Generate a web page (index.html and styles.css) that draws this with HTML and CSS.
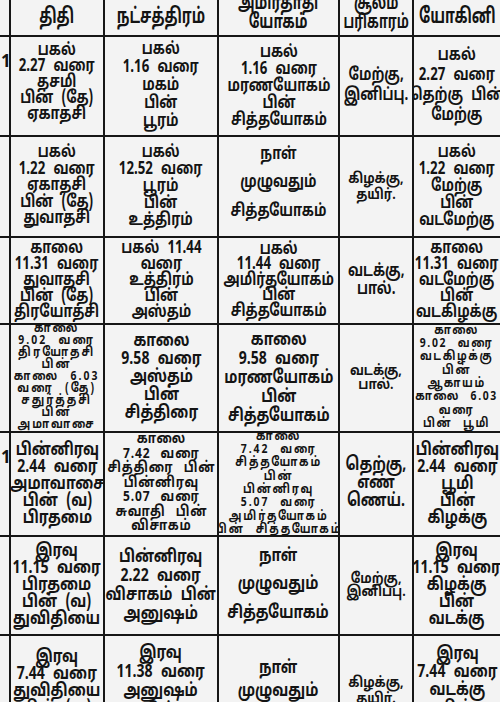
FILE: index.html
```html
<!DOCTYPE html>
<html lang="ta">
<head>
<meta charset="utf-8">
<link rel="stylesheet" href="styles.css">
</head>
<body>
<div class="sheet">
<div class="grid">
  <div class="cell stub"></div>
  <div class="cell head"><div class="t">திதி</div></div>
  <div class="cell head"><div class="t">நட்சத்திரம்</div></div>
  <div class="cell head two"><div class="t">அமிர்தாதி<br>யோகம்</div></div>
  <div class="cell head two sm"><div class="t">சூலம்<br>பரிகாரம்</div></div>
  <div class="cell head"><div class="t">யோகினி</div></div>

  <div class="cell stub"><span class="num">1</span></div>
  <div class="cell l16 up"><div class="t">பகல்<br>2.27 வரை<br>தசமி<br>பின் (தே)<br>ஏகாதசி</div></div>
  <div class="cell l18"><div class="t">பகல்<br>1.16 வரை<br>மகம்<br>பின்<br>பூரம்</div></div>
  <div class="cell l17"><div class="t">பகல்<br>1.16 வரை<br>மரணயோகம்<br>பின்<br>சித்தயோகம்</div></div>
  <div class="cell l20"><div class="t">மேற்கு,<br>இனிப்பு.</div></div>
  <div class="cell l20"><div class="t">பகல்<br>2.27 வரை<br>தெற்கு பின்<br>மேற்கு</div></div>

  <div class="cell stub"></div>
  <div class="cell l165"><div class="t">பகல்<br>1.22 வரை<br>ஏகாதசி<br>பின் (தே)<br>துவாதசி</div></div>
  <div class="cell l17"><div class="t">பகல்<br>12.52 வரை<br>பூரம்<br>பின்<br>உத்திரம்</div></div>
  <div class="cell l28 up"><div class="t">நாள்<br>முழுவதும்<br>சித்தயோகம்</div></div>
  <div class="cell l16 small"><div class="t">கிழக்கு,<br>தயிர்.</div></div>
  <div class="cell l17"><div class="t">பகல்<br>1.22 வரை<br>மேற்கு<br>பின்<br>வடமேற்கு</div></div>

  <div class="cell stub"></div>
  <div class="cell l16"><div class="t">காலை<br>11.31 வரை<br>துவாதசி<br>பின் (தே)<br>திரயோதசி</div></div>
  <div class="cell l16"><div class="t">பகல் 11.44<br>வரை<br>உத்திரம்<br>பின்<br>அஸ்தம்</div></div>
  <div class="cell l155"><div class="t">பகல்<br>11.44 வரை<br>அமிர்தயோகம்<br>பின்<br>சித்தயோகம்</div></div>
  <div class="cell l18"><div class="t">வடக்கு,<br>பால்.</div></div>
  <div class="cell l16"><div class="t">காலை<br>11.31 வரை<br>வடமேற்கு<br>பின்<br>வடகிழக்கு</div></div>

  <div class="cell stub"></div>
  <div class="cell xs"><div class="t">காலை<br>9.02 வரை<br>திரயோதசி<br>பின்<br>காலை 6.03<br>வரை (தே)<br>சதுர்த்தசி<br>பின்<br>அமாவாசை</div></div>
  <div class="cell l18 big"><div class="t">காலை<br>9.58 வரை<br>அஸ்தம்<br>பின்<br>சித்திரை</div></div>
  <div class="cell l19 big"><div class="t">காலை<br>9.58 வரை<br>மரணயோகம்<br>பின்<br>சித்தயோகம்</div></div>
  <div class="cell l14 small"><div class="t">வடக்கு,<br>பால்.</div></div>
  <div class="cell s13"><div class="t">காலை<br>9.02 வரை<br>வடகிழக்கு<br>பின்<br>ஆகாயம்<br>காலை 6.03<br>வரை<br>பின் பூமி</div></div>

  <div class="cell stub"><span class="num n5">1</span></div>
  <div class="cell l17 big"><div class="t">பின்னிரவு<br>2.44 வரை<br>அமாவாசை<br>பின் (வ)<br>பிரதமை</div></div>
  <div class="cell s145"><div class="t">காலை<br>7.42 வரை<br>சித்திரை பின்<br>பின்னிரவு<br>5.07 வரை<br>சுவாதி பின்<br>விசாகம்</div></div>
  <div class="cell s13 sm3"><div class="t">காலை<br>7.42 வரை<br>சித்தயோகம்<br>பின்<br>பின்னிரவு<br>5.07 வரை<br>அமிர்தயோகம்<br>பின் சித்தயோகம்</div></div>
  <div class="cell l18 big"><div class="t">தெற்கு,<br>எண்<br>ணெய்.</div></div>
  <div class="cell l17 big"><div class="t">பின்னிரவு<br>2.44 வரை<br>பூமி<br>பின்<br>கிழக்கு</div></div>

  <div class="cell stub"></div>
  <div class="cell l17 big"><div class="t">இரவு<br>11.15 வரை<br>பிரதமை<br>பின் (வ)<br>துவிதியை</div></div>
  <div class="cell l19 big"><div class="t">பின்னிரவு<br>2.22 வரை<br>விசாகம் பின்<br>அனுஷம்</div></div>
  <div class="cell l28 big"><div class="t">நாள்<br>முழுவதும்<br>சித்தயோகம்</div></div>
  <div class="cell l13 small"><div class="t">மேற்கு,<br>இனிப்பு.</div></div>
  <div class="cell l17 big"><div class="t">இரவு<br>11.15 வரை<br>கிழக்கு<br>பின்<br>வடக்கு</div></div>

  <div class="cell stub"></div>
  <div class="cell l17 big"><div class="t">இரவு<br>7.44 வரை<br>துவிதியை<br>பின் (வ)<br>திருதியை</div></div>
  <div class="cell l19 big"><div class="t">இரவு<br>11.38 வரை<br>அனுஷம்<br>பின்<br>கேட்டை</div></div>
  <div class="cell l23 big"><div class="t">நாள்<br>முழுவதும்<br>சித்தயோகம்</div></div>
  <div class="cell l16 small"><div class="t">கிழக்கு,<br>தயிர்.</div></div>
  <div class="cell l18 big"><div class="t">இரவு<br>7.44 வரை<br>வடக்கு<br>பின்<br>வடமேற்கு</div></div>
</div>
</div>
</body>
</html>
```
FILE: styles.css
```css
html, body {
  margin: 0;
  padding: 0;
  background: #f3f3f3;
}
.sheet {
  width: 500px;
  height: 702px;
  overflow: hidden;
}
.grid {
  display: grid;
  grid-template-columns: 9px 92px 112px 119px 72px 86px;
  grid-template-rows: 41px 98px 99px 85px 106px 102px 97px 110px;
  gap: 2px;
  margin-top: -6px;
  background: #161616;
  width: 500px;
  font-family: "Noto Sans Tamil", "Noto Sans", sans-serif;
  font-weight: 700;
  color: #141414;
  font-size: 17px;
}
.cell {
  background: #f3f3f3;
  display: flex;
  align-items: center;
  justify-content: center;
  overflow: hidden;
  min-width: 0;
}
.t {
  white-space: nowrap;
  text-align: center;
  transform: scaleX(0.78);
  word-spacing: 6px;
  flex: none;
}
.stub {
  justify-content: flex-start;
  align-items: flex-start;
}
.num {
  font-size: 17px;
  line-height: 16px;
  margin-top: 18px;
  margin-left: 1px;
}
.num.n5 { margin-top: 18px; }
.head {
  font-size: 21px;
  line-height: 22px;
  padding-top: 6px;
}
.head .t { transform: scaleX(0.68); word-spacing: 0; }
.head.two {
  font-size: 20px;
  line-height: 19px;
  align-items: flex-end;
  padding-top: 0;
  padding-bottom: 2px;
}
.head.two.sm { font-size: 19px; }
.up { padding-bottom: 6px; }
.l13 { line-height: 13px; }
.l14 { line-height: 14px; }
.l155 { line-height: 15.5px; }
.l16 { line-height: 16px; }
.l165 { line-height: 16.5px; }
.l17 { line-height: 17px; }
.l18 { line-height: 18px; }
.l19 { line-height: 19px; }
.l20 { line-height: 20px; }
.l23 { line-height: 23px; }
.l28 { line-height: 28.5px; }
.big { font-size: 18px; }
.small { font-size: 14.5px; }
.small .t { transform: scaleX(0.84); word-spacing: 0; }
.xs { font-size: 13px; line-height: 11.9px; }
.xs .t { transform: scaleX(0.8); letter-spacing: 2.6px; word-spacing: 8px; }
.s13 { font-size: 13px; line-height: 13.3px; }
.s13 .t { transform: scaleX(0.8); letter-spacing: 2px; word-spacing: 8px; }
.s13.sm3 { font-size: 13px; }
.s13.sm3 .t { letter-spacing: 2.4px; }
.s145 { font-size: 15px; line-height: 14.5px; }
.s145 .t { transform: scaleX(0.8); letter-spacing: 1px; word-spacing: 8px; }
```
